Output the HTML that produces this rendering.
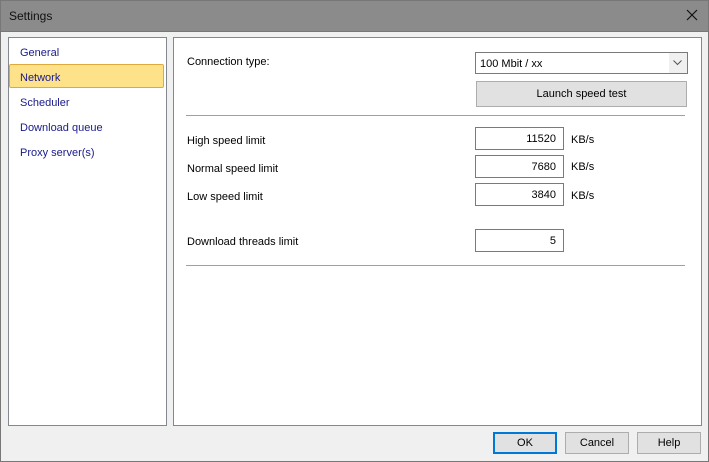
<!DOCTYPE html>
<html><head><style>
body{margin:0;width:709px;height:462px;overflow:hidden;background:#f0f0f0;font-family:"Liberation Sans",sans-serif;font-size:11px;color:#000;position:relative}
.a{position:absolute}
#title{left:0;top:0;width:709px;height:31px;background:#8b8b8b;border-bottom:1px solid #777}
#title span{position:absolute;left:9px;top:9px;font-size:12px;color:#111}
.panel{background:#fff;border:1px solid #828790}
.nav{left:20px;color:#1a1a8c;font-size:11px}
.inp{background:#fff;border:1px solid #7a7a7a;box-sizing:border-box;height:23px;text-align:right;padding:5px 7px 0 0}
.btn{background:#e1e1e1;border:1px solid #adadad;box-sizing:border-box;text-align:center;line-height:20px}
.hr{height:1px;background:#a0a0a0;left:186px;width:499px}
</style></head><body>
<div class="a" id="title"><span>Settings</span>
<svg class="a" style="left:686px;top:9px" width="12" height="12"><path d="M1 1L11 11M11 1L1 11" stroke="#111" stroke-width="1.2"/></svg></div>
<div class="a panel" style="left:8px;top:37px;width:157px;height:387px"></div>
<div class="a panel" style="left:173px;top:37px;width:527px;height:387px"></div>
<div class="a" style="left:9px;top:64px;width:155px;height:24px;box-sizing:border-box;background:#fde28a;border:1px solid #e0a93c;border-radius:2px"></div>
<div class="a nav" style="top:47px">General</div>
<div class="a nav" style="top:72px">Network</div>
<div class="a nav" style="top:97px">Scheduler</div>
<div class="a nav" style="top:122px">Download queue</div>
<div class="a nav" style="top:147px">Proxy server(s)</div>

<div class="a" style="left:187px;top:56px">Connection type:</div>
<div class="a" style="left:475px;top:52px;width:213px;height:22px;box-sizing:border-box;border:1px solid #7a7a7a;background:#fff"><span class="a" style="left:4px;top:5px">100 Mbit / xx</span>
<div class="a" style="right:0;top:0;width:18px;height:20px;background:#f0f0f0"></div>
<svg class="a" style="right:5px;top:7px" width="9" height="6"><path d="M0.5 0.5L4.5 4.5L8.5 0.5" fill="none" stroke="#555"/></svg></div>
<div class="a btn" style="left:476px;top:81px;width:211px;height:26px;line-height:25px">Launch speed test</div>
<div class="a hr" style="top:115px"></div>

<div class="a" style="left:187px;top:135px">High speed limit</div>
<div class="a inp" style="left:475px;top:127px;width:89px">11520</div>
<div class="a" style="left:571px;top:134px">KB/s</div>
<div class="a" style="left:187px;top:163px">Normal speed limit</div>
<div class="a inp" style="left:475px;top:155px;width:89px">7680</div>
<div class="a" style="left:571px;top:161px">KB/s</div>
<div class="a" style="left:187px;top:191px">Low speed limit</div>
<div class="a inp" style="left:475px;top:183px;width:89px">3840</div>
<div class="a" style="left:571px;top:190px">KB/s</div>
<div class="a" style="left:187px;top:236px">Download threads limit</div>
<div class="a inp" style="left:475px;top:229px;width:89px">5</div>
<div class="a hr" style="top:265px"></div>

<div class="a btn" style="left:493px;top:432px;width:64px;height:22px;border:2px solid #0078d7;line-height:19px">OK</div>
<div class="a btn" style="left:565px;top:432px;width:64px;height:22px">Cancel</div>
<div class="a btn" style="left:637px;top:432px;width:64px;height:22px">Help</div>
<div class="a" style="left:0;top:0;width:707px;height:460px;border:1px solid #777;pointer-events:none"></div>
</body></html>
